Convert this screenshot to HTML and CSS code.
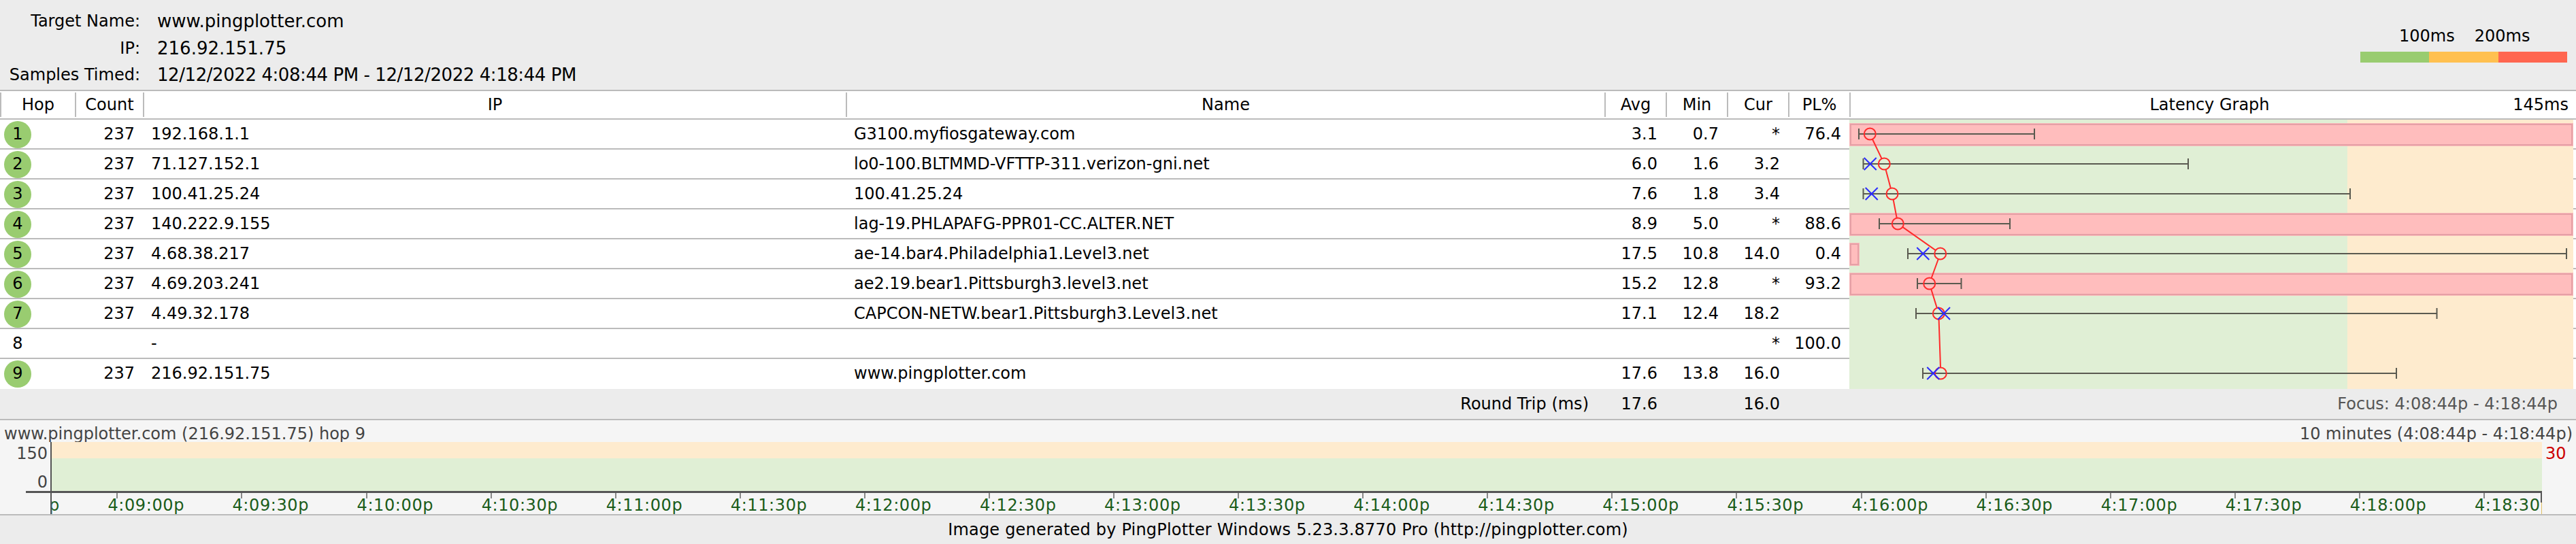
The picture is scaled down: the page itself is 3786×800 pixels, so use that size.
FILE: index.html
```html
<!DOCTYPE html>
<html lang="en">
<head>
<meta charset="utf-8">
<title>PingPlotter</title>
<link rel="stylesheet" href="styles.css">
</head>
<body>
<header class="top">
  <dl class="info">
    <dt>Target Name:</dt><dd>www.pingplotter.com</dd>
    <dt>IP:</dt><dd>216.92.151.75</dd>
    <dt>Samples Timed:</dt><dd class="range-text">12/12/2022 4:08:44 PM - 12/12/2022 4:18:44 PM</dd>
  </dl>
  <div class="legend">
    <div class="legend-labels"><span>100ms</span><span>200ms</span></div>
    <div class="legend-bar"><i class="lg"></i><i class="lo"></i><i class="lr"></i></div>
  </div>
</header>

<div class="thead">
  <div class="th">Hop</div>
  <div class="th">Count</div>
  <div class="th">IP</div>
  <div class="th">Name</div>
  <div class="th">Avg</div>
  <div class="th">Min</div>
  <div class="th">Cur</div>
  <div class="th">PL%</div>
  <div class="th th-graph"><span></span><span>Latency Graph</span><span class="th-scale">145ms</span></div>
</div>

<section class="hops">
  <div class="row"><span class="hop ok">1</span><span class="num">237</span><span class="txt">192.168.1.1</span><span class="txt">G3100.myfiosgateway.com</span><span class="num">3.1</span><span class="num">0.7</span><span class="num">*</span><span class="num">76.4</span></div>
  <div class="row"><span class="hop ok">2</span><span class="num">237</span><span class="txt">71.127.152.1</span><span class="txt">lo0-100.BLTMMD-VFTTP-311.verizon-gni.net</span><span class="num">6.0</span><span class="num">1.6</span><span class="num">3.2</span><span class="num"></span></div>
  <div class="row"><span class="hop ok">3</span><span class="num">237</span><span class="txt">100.41.25.24</span><span class="txt">100.41.25.24</span><span class="num">7.6</span><span class="num">1.8</span><span class="num">3.4</span><span class="num"></span></div>
  <div class="row"><span class="hop ok">4</span><span class="num">237</span><span class="txt">140.222.9.155</span><span class="txt">lag-19.PHLAPAFG-PPR01-CC.ALTER.NET</span><span class="num">8.9</span><span class="num">5.0</span><span class="num">*</span><span class="num">88.6</span></div>
  <div class="row"><span class="hop ok">5</span><span class="num">237</span><span class="txt">4.68.38.217</span><span class="txt">ae-14.bar4.Philadelphia1.Level3.net</span><span class="num">17.5</span><span class="num">10.8</span><span class="num">14.0</span><span class="num">0.4</span></div>
  <div class="row"><span class="hop ok">6</span><span class="num">237</span><span class="txt">4.69.203.241</span><span class="txt">ae2.19.bear1.Pittsburgh3.level3.net</span><span class="num">15.2</span><span class="num">12.8</span><span class="num">*</span><span class="num">93.2</span></div>
  <div class="row"><span class="hop ok">7</span><span class="num">237</span><span class="txt">4.49.32.178</span><span class="txt">CAPCON-NETW.bear1.Pittsburgh3.Level3.net</span><span class="num">17.1</span><span class="num">12.4</span><span class="num">18.2</span><span class="num"></span></div>
  <div class="row"><span class="hop">8</span><span class="num"></span><span class="txt">-</span><span class="txt"></span><span class="num"></span><span class="num"></span><span class="num">*</span><span class="num">100.0</span></div>
  <div class="row"><span class="hop ok">9</span><span class="num">237</span><span class="txt">216.92.151.75</span><span class="txt">www.pingplotter.com</span><span class="num">17.6</span><span class="num">13.8</span><span class="num">16.0</span><span class="num"></span></div>

  <svg class="latency" viewBox="2718 176 1064 396" width="1064" height="396" aria-hidden="true">
    <rect class="zone-ok" x="2718" y="176" width="732" height="396"/>
    <rect class="zone-warn" x="3450" y="176" width="332" height="396"/>

    <rect class="loss-edge" x="2718" y="181" width="1064" height="34"/>
    <rect class="loss" x="2720" y="183" width="1060" height="30"/>
    <rect class="loss-edge" x="2718" y="313" width="1064" height="34"/>
    <rect class="loss" x="2720" y="315" width="1060" height="30"/>
    <rect class="loss-edge" x="2718" y="357" width="15" height="34"/>
    <rect class="loss" x="2720" y="359" width="11" height="30"/>
    <rect class="loss-edge" x="2718" y="401" width="1064" height="34"/>
    <rect class="loss" x="2720" y="403" width="1060" height="30"/>

    <polyline class="trend" points="2748.3,197 2769.3,241 2781,285 2789.3,329 2851.7,373 2835.7,417 2849.3,461 2852.3,549"/>

    <circle class="pt-bg on-loss" cx="2748.3" cy="197" r="8.5"/>
    <circle class="pt-bg" cx="2769.3" cy="241" r="8.5"/>
    <circle class="pt-bg" cx="2781" cy="285" r="8.5"/>
    <circle class="pt-bg on-loss" cx="2789.3" cy="329" r="8.5"/>
    <circle class="pt-bg" cx="2851.7" cy="373" r="8.5"/>
    <circle class="pt-bg on-loss" cx="2835.7" cy="417" r="8.5"/>
    <circle class="pt-bg" cx="2849.3" cy="461" r="8.5"/>
    <circle class="pt-bg" cx="2852.3" cy="549" r="8.5"/>

    <path class="range" d="M2732 189v16M2732 197H2990M2990 189v16"/>
    <path class="range" d="M2738.5 233v16M2738.5 241H3216M3216 233v16"/>
    <path class="range" d="M2738.5 277v16M2738.5 285H3454M3454 277v16"/>
    <path class="range" d="M2762 321v16M2762 329H2954M2954 321v16"/>
    <path class="range" d="M2804 365v16M2804 373H3772M3772 365v16"/>
    <path class="range" d="M2818 409v16M2818 417H2882.5M2882.5 409v16"/>
    <path class="range" d="M2816 453v16M2816 461H3581.5M3581.5 453v16"/>
    <path class="range" d="M2826 541v16M2826 549H3522M3522 541v16"/>

    <circle class="pt" cx="2748.3" cy="197" r="8.5"/>
    <circle class="pt" cx="2769.3" cy="241" r="8.5"/>
    <circle class="pt" cx="2781" cy="285" r="8.5"/>
    <circle class="pt" cx="2789.3" cy="329" r="8.5"/>
    <circle class="pt" cx="2851.7" cy="373" r="8.5"/>
    <circle class="pt" cx="2835.7" cy="417" r="8.5"/>
    <circle class="pt" cx="2849.3" cy="461" r="8.5"/>
    <circle class="pt" cx="2852.3" cy="549" r="8.5"/>

    <path class="cur" d="M2739.7 232l18 18M2757.7 232l-18 18"/>
    <path class="cur" d="M2741.7 276l18 18M2759.7 276l-18 18"/>
    <path class="cur" d="M2817.3 364l18 18M2835.3 364l-18 18"/>
    <path class="cur" d="M2848 452l18 18M2866 452l-18 18"/>
    <path class="cur" d="M2832.3 540l18 18M2850.3 540l-18 18"/>
  </svg>
</section>

<div class="row row-total">
  <span></span><span></span><span></span>
  <span class="num total-label">Round Trip (ms)</span>
  <span class="num">17.6</span><span class="num"></span><span class="num">16.0</span><span class="num"></span>
  <span class="focus">Focus: 4:08:44p - 4:18:44p</span>
</div>

<section class="panel">
  <div class="panel-title"><span>www.pingplotter.com (216.92.151.75) hop 9</span><span>10 minutes (4:08:44p - 4:18:44p)</span></div>
  <div class="chart">
    <div class="ylabels"><span>150</span><span>0</span></div>
    <div class="plot"><div class="plot-warn"></div><div class="plot-ok"></div></div>
    <div class="pl-value">30</div>
    <div class="stub"></div>
    <div class="axis">
      <div class="ticks">
        <span class="tick">4:08:30p</span><span class="tick">4:09:00p</span><span class="tick">4:09:30p</span><span class="tick">4:10:00p</span><span class="tick">4:10:30p</span><span class="tick">4:11:00p</span><span class="tick">4:11:30p</span><span class="tick">4:12:00p</span><span class="tick">4:12:30p</span><span class="tick">4:13:00p</span><span class="tick">4:13:30p</span><span class="tick">4:14:00p</span><span class="tick">4:14:30p</span><span class="tick">4:15:00p</span><span class="tick">4:15:30p</span><span class="tick">4:16:00p</span><span class="tick">4:16:30p</span><span class="tick">4:17:00p</span><span class="tick">4:17:30p</span><span class="tick">4:18:00p</span><span class="tick">4:18:30p</span>
      </div>
    </div>
  </div>
</section>

<footer class="foot">Image generated by PingPlotter Windows 5.23.3.8770 Pro (http://pingplotter.com)</footer>
</body>
</html>
```
FILE: styles.css
```css
* { box-sizing: border-box; }
html, body { margin: 0; padding: 0; }
body {
  width: 3786px;
  height: 800px;
  overflow: hidden;
  background: #ececec;
  color: #000;
  font: 24px/42px "DejaVu Sans", Verdana, sans-serif;
}

.top {
  display: flex;
  justify-content: space-between;
  height: 134px;
  border-bottom: 2px solid #bbb;
}
.info {
  display: grid;
  grid-template-columns: 206px auto;
  column-gap: 25px;
  grid-auto-rows: 39.5px;
  align-content: start;
  margin: 12px 0 0;
  line-height: 39.5px;
}
.info dt { text-align: right; white-space: nowrap; }
.info dd { margin: 0; font-size: 26px; }
.info .range-text { letter-spacing: -.43px; }

.legend { width: 304px; margin: 36px 13px 0 0; }
.legend-labels { display: flex; gap: 29px; padding-left: 57px; line-height: 34px; height: 40px; }
.legend-bar { display: flex; height: 16px; }
.legend-bar i { display: block; flex: 1; }
.lg { background: #99cc70; }
.lo { background: #ffc050; }
.lr { background: #ff6650; }

.thead {
  display: grid;
  grid-template-columns: 110px 100px 1033px 1115px 90px 90px 90px 90px 1fr;
  height: 42px;
  background: #fff;
  border-bottom: 2px solid #bbb;
}
.th {
  margin: 2px 0;
  border-left: 2px solid #bbb;
  text-align: center;
  line-height: 36px;
}
.th-graph {
  display: grid;
  grid-template-columns: 1fr auto 1fr;
  padding-right: 11px;
}
.th-scale { justify-self: end; }

.hops { position: relative; background: #fff; }
.row {
  display: grid;
  grid-template-columns: 110px 100px 1033px 1115px 90px 90px 90px 90px 1fr;
  height: 44px;
  border-bottom: 2px solid #bbb;
}
.hops .row:nth-last-child(2) { border-bottom: 0; }
.num { text-align: right; padding-right: 12px; }
.txt { padding-left: 12px; white-space: nowrap; }
.hop {
  width: 40px;
  height: 40px;
  margin: 2px 0 0 6px;
  border-radius: 50%;
  text-align: center;
  line-height: 38px;
}
.ok { background: #99cc70; }

.latency { position: absolute; left: 2718px; top: 0; display: block; }
.zone-ok { fill: #e0efd5; }
.zone-warn { fill: #feebce; }
.loss-edge { fill: #f8b9ba; }
.loss { fill: #ffbdbd; stroke: #e6a0a6; stroke-width: 2; }
.trend { fill: none; stroke: #ff2a2a; stroke-width: 2; }
.pt-bg { fill: #e0efd5; }
.pt-bg.on-loss { fill: #ffbdbd; }
.pt { fill: none; stroke: #ff2a2a; stroke-width: 2; }
.range { fill: none; stroke: #5a5a50; stroke-width: 2; }
.cur { fill: none; stroke: #2a2aff; stroke-width: 2; }

.row-total { height: 46px; background: #ececec; line-height: 44px; }
.total-label { white-space: nowrap; padding-right: 23px; }
.focus { color: #555; text-align: right; padding-right: 27px; white-space: nowrap; }

.panel {
  height: 140px;
  background: #f5f5f5;
  border-bottom: 2px solid #bbb;
}
.panel-title {
  display: flex;
  justify-content: space-between;
  height: 32px;
  padding: 0 5px 0 6px;
  overflow: hidden;
  color: #444;
  line-height: 40px;
}
.chart {
  display: grid;
  grid-template-columns: 74px 3662px 1fr;
  grid-template-rows: 72px 34px;
}
.ylabels {
  display: flex;
  flex-direction: column;
  align-items: flex-end;
  gap: 8px;
  padding-right: 4px;
  color: #444;
  line-height: 34px;
}
.plot {
  display: flex;
  flex-direction: column;
  border-left: 2px solid #555;
}
.plot-warn { height: 24px; background: #feebce; }
.plot-ok { flex: 1; background: #e0efd5; }
.pl-value { padding-left: 5px; color: #c00; line-height: 34px; }
.stub { margin-left: 38px; border-top: 3px solid #555; }
.axis {
  position: relative;
  grid-column: 2;
  overflow: hidden;
  border-top: 3px solid #555;
  border-left: 2px solid #555;
}
.axis::after {
  content: "";
  position: absolute;
  top: 0;
  right: 0;
  width: 2px;
  height: 14px;
  background: #555;
}
.ticks { display: flex; margin-left: -87.68px; }
.tick {
  position: relative;
  flex: 0 0 183.08px;
  color: #1a5c1a;
  white-space: nowrap;
  text-indent: -13px;
  letter-spacing: .6px;
  line-height: 36px;
  height: 31px;
}
.tick::before {
  content: "";
  position: absolute;
  top: 0;
  left: 0;
  width: 2px;
  height: 8px;
  background: #888;
}

.foot { height: 42px; text-align: center; letter-spacing: .2px; }
```
